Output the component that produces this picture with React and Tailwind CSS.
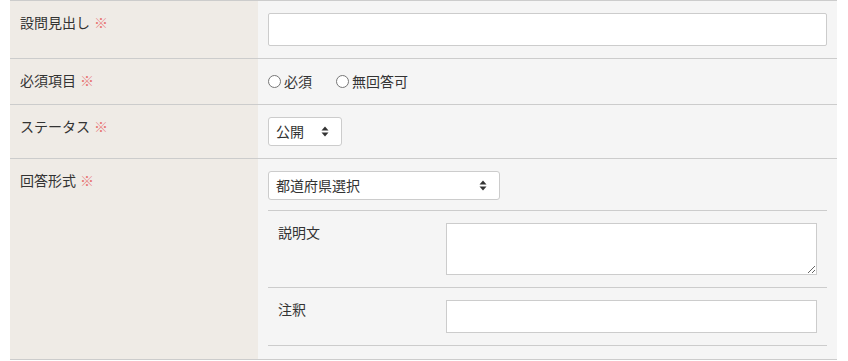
import React from "react";

const font = { fontFamily: '"Noto Sans CJK JP", "Noto Sans", sans-serif' };

/* ── Select arrow icon ── */
function Arrows() {
  return (
    <svg width="8" height="11" viewBox="0 0 8 11" className="shrink-0">
      <path d="M4 0.5 L7.5 4.5 H0.5 Z" fill="#333" />
      <path d="M4 10.5 L7.5 6.5 H0.5 Z" fill="#333" />
    </svg>
  );
}

function FakeSelect({ value, width }) {
  return (
    <div
      className={`h-[29px] ${width} flex items-center justify-between pl-[7px] pr-[12px] bg-white border border-[#ccc] rounded-[3px] text-[14px] text-[#333]`}
    >
      <span className="leading-[21px]">{value}</span>
      <Arrows />
    </div>
  );
}

function Radio({ label }) {
  return (
    <label className="flex items-center gap-[3px]">
      <span className="w-[13px] h-[13px] rounded-full border border-[#767676] bg-white" />
      <span>{label}</span>
    </label>
  );
}

function Required() {
  return <span className="text-[#e87474] ml-[4px]">※</span>;
}

function Row({ label, children, last }) {
  return (
    <div className="flex border-b border-[#ccc]">
      <div className="w-[248px] shrink-0 bg-[#efebe6] px-[10px] pt-[11px] text-[14px] leading-[21px] text-[#333]">
        {label}
        <Required />
      </div>
      <div className={`flex-1 bg-[#f5f5f5] px-[10px] pt-[12px] ${last ? "pb-[13px]" : "pb-[12px]"}`}>
        {children}
      </div>
    </div>
  );
}

function SubRow({ label, children }) {
  return (
    <div className="flex border-b border-[#ccc]">
      <div className="w-[168px] shrink-0 px-[10px] pt-[11px] text-[14px] leading-[21px] text-[#333]">
        {label}
      </div>
      <div className="flex-1 px-[10px] py-[12px]">{children}</div>
    </div>
  );
}

export default function App() {
  return (
    <div className="w-[848px] h-[361px] bg-white pl-[10px] pr-[11px] overflow-hidden" style={font}>
      <div className="border-t border-[#ccc]">
        <Row label="設問見出し">
          <div className="h-[33px] bg-white border border-[#ccc] rounded-[2px]" />
        </Row>

        <Row label="必須項目">
          <div className="flex items-center gap-[24px] text-[14px] leading-[21px] text-[#333]">
            <Radio label="必須" />
            <Radio label="無回答可" />
          </div>
        </Row>

        <Row label="ステータス">
          <FakeSelect value="公開" width="w-[74px]" />
        </Row>

        <Row label="回答形式" last>
          <FakeSelect value="都道府県選択" width="w-[232px]" />
          <div className="mt-[10px] border-t border-[#ccc]">
            <SubRow label="説明文">
              <textarea className="block w-full h-[52px] bg-white border border-[#ccc] resize-y outline-none" />
            </SubRow>
            <SubRow label="注釈">
              <div className="h-[33px] bg-white border border-[#ccc]" />
            </SubRow>
          </div>
        </Row>
      </div>
    </div>
  );
}
